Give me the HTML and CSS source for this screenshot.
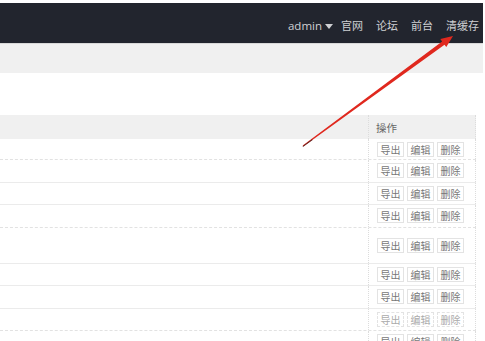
FILE: index.html
```html
<!DOCTYPE html>
<html lang="zh-CN">
<head>
<meta charset="utf-8">
<title>后台</title>
<link rel="stylesheet" href="styles.css">
</head>
<body>
<div class="page">
  <header class="nav">
    <span class="nav-item user">admin<span class="caret"></span></span>
    <span class="nav-item">官网</span>
    <span class="nav-item">论坛</span>
    <span class="nav-item">前台</span>
    <span class="nav-item">清缓存</span>
  </header>
  <div class="subbar"></div>
  <div class="spacer"></div>
  <div class="table">
    <div class="row head"><div class="c1"></div><div class="c2 th">操作</div></div>
    <div class="row dotted first"><div class="c1"></div><div class="c2"><span class="btn">导出</span><span class="btn">编辑</span><span class="btn">删除</span></div></div>
    <div class="row"><div class="c1"></div><div class="c2"><span class="btn">导出</span><span class="btn">编辑</span><span class="btn">删除</span></div></div>
    <div class="row"><div class="c1"></div><div class="c2"><span class="btn">导出</span><span class="btn">编辑</span><span class="btn">删除</span></div></div>
    <div class="row dotted"><div class="c1"></div><div class="c2"><span class="btn">导出</span><span class="btn">编辑</span><span class="btn">删除</span></div></div>
    <div class="row tall"><div class="c1"></div><div class="c2"><span class="btn">导出</span><span class="btn">编辑</span><span class="btn">删除</span></div></div>
    <div class="row"><div class="c1"></div><div class="c2"><span class="btn">导出</span><span class="btn">编辑</span><span class="btn">删除</span></div></div>
    <div class="row"><div class="c1"></div><div class="c2"><span class="btn">导出</span><span class="btn">编辑</span><span class="btn">删除</span></div></div>
    <div class="row dotted"><div class="c1"></div><div class="c2"><span class="btn faded">导出</span><span class="btn faded">编辑</span><span class="btn faded">删除</span></div></div>
    <div class="row"><div class="c1"></div><div class="c2"><span class="btn">导出</span><span class="btn">编辑</span><span class="btn">删除</span></div></div>
  </div>
  <svg class="arrow" width="485" height="341" viewBox="0 0 485 341" aria-hidden="true">
    <polygon points="302.7,145.6 442.1,41.5 440.3,39.1 453,36 446.3,47.1 444.5,44.7 303.3,146.4" fill="#e0281e"/>
    <polygon points="302.5,146.2 312,139.3 312.6,140.1 303.2,146.8" fill="#5a2a28"/>
  </svg>
</div>
</body>
</html>
```

FILE: styles.css
```css
html, body {
  margin: 0;
  padding: 0;
  background: #fff;
  overflow: hidden;
}
.page {
  position: relative;
  width: 485px;
  height: 341px;
  padding: 3px 2px 0 0;
  box-sizing: border-box;
  font-family: "Liberation Sans", "Noto Sans CJK SC", sans-serif;
  overflow: hidden;
}
.nav {
  height: 41px;
  background: #22252e;
  display: flex;
  justify-content: flex-end;
  align-items: center;
  gap: 13px;
  padding-right: 4px;
  padding-top: 6px;
  box-sizing: border-box;
  border-bottom: 1px solid #d8d8d8;
}
.nav-item {
  color: #cfd0d3;
  font-size: 11px;
  line-height: 14px;
  white-space: nowrap;
}
.user {
  display: flex;
  align-items: center;
  font-family: "Open Sans", "Liberation Sans", sans-serif;
  font-size: 11.5px;
  margin-right: -5px;
}
.caret {
  display: inline-block;
  width: 0;
  height: 0;
  margin-left: 3px;
  border-left: 4px solid transparent;
  border-right: 4px solid transparent;
  border-top: 5px solid #cfd0d3;
}
.subbar {
  height: 29px;
  background: #f0f0f0;
}
.spacer {
  height: 42px;
}
.table {
  width: 476px;
  display: flex;
  flex-direction: column;
}
.row {
  display: flex;
  height: 21.5px;
  border-bottom: 1px solid #ebebeb;
}
.row.first {
  height: 20px;
}
.row.dotted {
  border-bottom: 1px dashed #e2e2e2;
}
.row.tall {
  height: 35px;
}
.row.head {
  height: 24px;
  background: #f0f0f0;
  border-bottom: none;
}
.c1 {
  flex: 1;
}
.c2 {
  width: 108px;
  border-left: 1px dotted #dcdcdc;
  border-right: 1px dotted #dcdcdc;
  display: flex;
  align-items: center;
  gap: 3px;
  padding-left: 8px;
  box-sizing: border-box;
}
.th {
  font-size: 10.5px;
  color: #666;
  padding-left: 7px;
}
.btn {
  display: inline-flex;
  align-items: center;
  justify-content: center;
  width: 27px;
  height: 15px;
  box-sizing: border-box;
  border: 1px solid #e3e3e3;
  font-size: 10px;
  color: #777;
  background: #fff;
}
.btn.faded {
  color: #aaa;
  border-style: dashed;
}
.arrow {
  position: absolute;
  left: 0;
  top: 0;
  pointer-events: none;
}
```
